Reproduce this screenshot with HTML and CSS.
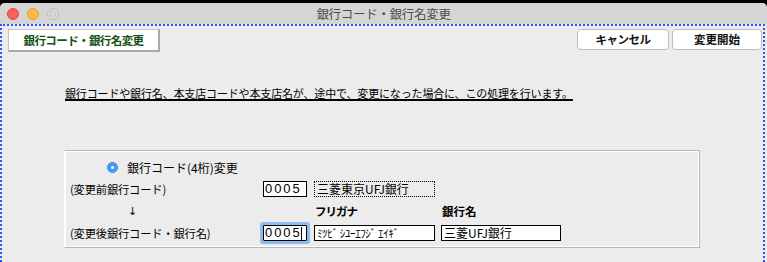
FILE: index.html
```html
<!DOCTYPE html>
<html lang="ja">
<head>
<meta charset="utf-8">
<title>銀行コード・銀行名変更</title>
<link rel="stylesheet" href="styles.css">
</head>
<body>
<div class="window">
  <div class="titlebar">
    <div class="lights">
      <span class="light red"></span>
      <span class="light yellow"></span>
      <span class="light gray"></span>
    </div>
    <div class="title">銀行コード・銀行名変更</div>
    <div></div>
  </div>
  <div class="content">
    <div class="toolbar">
      <div class="tab">銀行コード・銀行名変更</div>
      <div class="actions">
        <button class="btn">キャンセル</button>
        <button class="btn">変更開始</button>
      </div>
    </div>
    <p class="desc">銀行コードや銀行名、本支店コードや本支店名が、途中で、変更になった場合に、この処理を行います。</p>
    <div class="group">
      <div class="radio-row"><span class="radio"></span><span>銀行コード(4桁)変更</span></div>
      <div class="label">(変更前銀行コード)</div>
      <div class="field code">0005</div>
      <div class="field dotted">三菱東京UFJ銀行</div>
      <div></div>
      <div class="label arrow">↓</div>
      <div></div>
      <div class="caption kana-cap">フリガナ</div>
      <div class="caption">銀行名</div>
      <div class="label">(変更後銀行コード・銀行名)</div>
      <div class="field code focus">0005<span class="caret"></span></div>
      <div class="field kana">ﾐﾂﾋﾞ ｼﾕｰｴﾌｼﾞ ｴｲｷﾞ</div>
      <div class="field name">三菱UFJ銀行</div>
    </div>
  </div>
</div>
</body>
</html>
```
FILE: styles.css
```css
html, body {
  margin: 0;
  padding: 0;
}
body {
  width: 767px;
  height: 262px;
  overflow: hidden;
  background: #000;
  font-family: "Noto Sans CJK JP", "Noto Sans", sans-serif;
  color: #000;
}
.window {
  margin-top: 3px;
  height: 259px;
  background: #ececec;
  border-radius: 5px 5px 0 0;
  overflow: hidden;
  display: flex;
  flex-direction: column;
}
.titlebar {
  height: 21px;
  flex: none;
  background: #d5d5d5;
  display: grid;
  grid-template-columns: 1fr auto 1fr;
  align-items: center;
}
.lights {
  display: flex;
  gap: 8px;
  padding-left: 7px;
  align-items: center;
}
.light {
  width: 12px;
  height: 12px;
  border-radius: 50%;
  box-sizing: border-box;
}
.red { background: #fc605b; border: 1px solid #e0443e; }
.yellow { background: #fdbc40; border: 1px solid #dea123; }
.gray { background: #d9d9d9; border: 1px solid #bfbfbf; box-shadow: inset 0 0 0 2px #d9d9d9, inset 0 0 0 3px #c4c4c4; }
.title {
  font-size: 12.5px;
  color: #4c4c4c;
  line-height: 21px;
  letter-spacing: -0.3px;
}
.content {
  flex: 1;
  margin-right: 2px;
  border: 2px dotted #3350ff;
  border-bottom: none;
  padding: 3px 1px 0 6px;
}
.toolbar {
  display: flex;
  justify-content: space-between;
  align-items: flex-start;
}
.tab {
  width: 152px;
  height: 23px;
  box-sizing: border-box;
  background: #fff;
  border: 1px solid #c4c4c4;
  border-right: 2px solid #a9a9a9;
  border-bottom: 2px solid #a9a9a9;
  color: #145214;
  font-weight: bold;
  font-size: 11.5px;
  letter-spacing: -0.6px;
  text-align: center;
  line-height: 20px;
}
.actions {
  display: flex;
  gap: 3px;
}
.btn {
  height: 21px;
  box-sizing: border-box;
  background: #fff;
  border: 1px solid #bcbcbc;
  border-radius: 4px;
  font-family: inherit;
  font-weight: bold;
  font-size: 11.5px;
  padding: 0;
  line-height: 19px;
  color: #111;
}
.actions .btn:first-child { width: 92px; letter-spacing: -0.5px; }
.actions .btn:last-child { width: 90px; }
.desc {
  margin: 35px 0 0 57px;
  font-size: 11px;
  line-height: 13px;
  letter-spacing: -0.15px;
  text-decoration: underline;
  text-decoration-thickness: 1.5px;
  text-underline-offset: 1px;
}
.group {
  margin: 50px 0 0 56px;
  width: 636px;
  height: 98px;
  box-sizing: border-box;
  border: 1px solid #b5b5b5;
  border-left-color: #fff;
  box-shadow: inset 1px 1px 0 #fff, inset -1px -1px 0 #fff;
  padding: 7px 0 0 5px;
  display: grid;
  grid-template-columns: 193px 51px 127px 120px;
  grid-template-rows: 18px 18px 18px 18px;
  row-gap: 4px;
  align-items: center;
}
.radio-row {
  grid-column: 1 / -1;
  display: flex;
  align-items: center;
  padding-left: 37px;
  font-size: 12px;
  gap: 9px;
}
.radio {
  width: 11px;
  height: 11px;
  border-radius: 50%;
  box-sizing: border-box;
  background: #3d98f7;
  border: 1px solid #2f86e6;
  box-shadow: inset 0 0 0 3px #3d98f7, inset 0 0 0 5px #fff;
}
.label {
  font-size: 11.3px;
  letter-spacing: -0.2px;
  white-space: nowrap;
}
.arrow {
  padding-left: 58px;
  font-family: "DejaVu Sans", sans-serif;
  font-size: 11px;
}
.caption {
  font-size: 11.5px;
  font-weight: bold;
  padding-left: 1px;
}
.kana-cap { letter-spacing: -1px; }
.field {
  height: 16px;
  box-sizing: border-box;
  border: 1px solid #000;
  background: #fff;
  font-size: 12px;
  line-height: 14px;
  padding-left: 2px;
  white-space: nowrap;
}
.code {
  width: 44px;
  font-family: "Liberation Sans", sans-serif;
  font-size: 13px;
  letter-spacing: 1.9px;
  padding-left: 1px;
  display: flex;
  align-items: center;
  overflow: hidden;
}
.focus {
  box-shadow: 0 0 0 3px #8dbdf0;
  border-radius: 1px;
}
.caret {
  width: 1px;
  height: 13px;
  background: #000;
  margin-left: -1px;
}
.dotted {
  width: 121px;
  background: transparent;
  border: 1px dotted #000;
}
.kana {
  width: 121px;
  font-size: 11px;
  letter-spacing: -0.4px;
}
.name {
  width: 120px;
}
```
